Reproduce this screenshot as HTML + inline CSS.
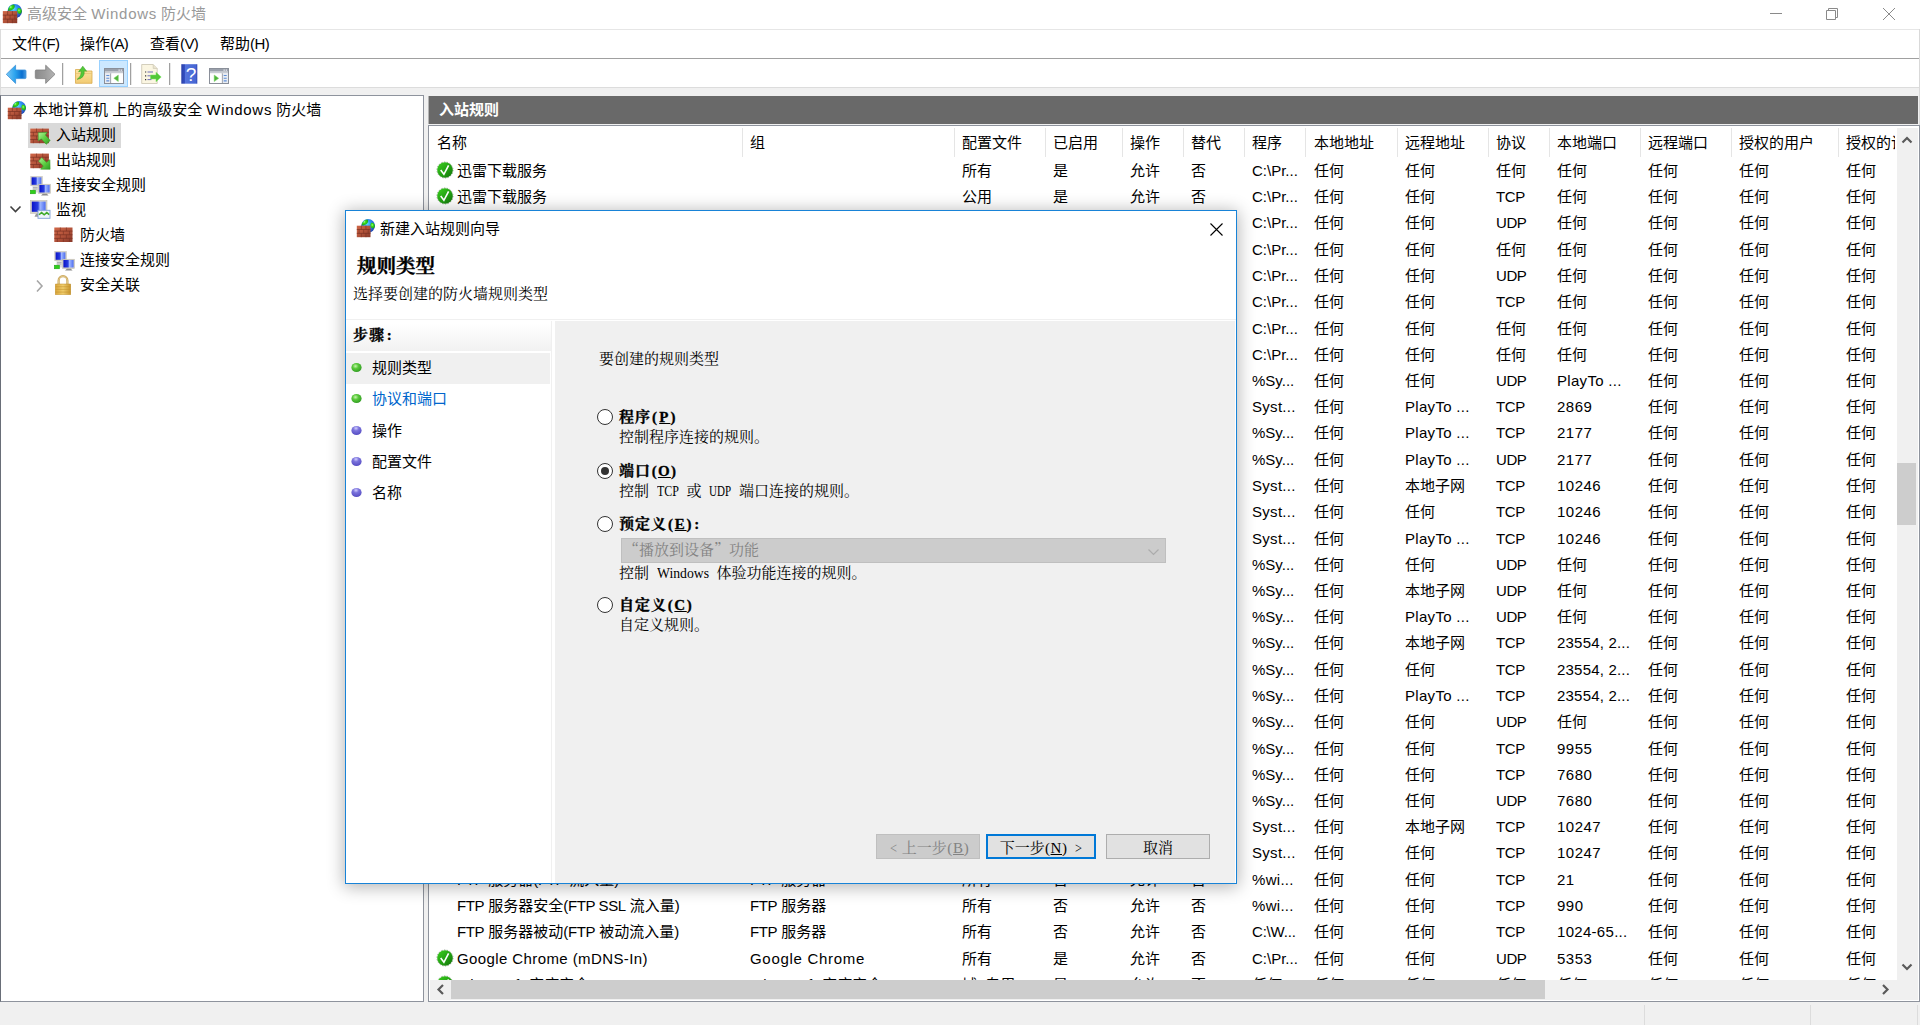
<!DOCTYPE html><html lang="zh-CN"><head><meta charset="utf-8"><title>高级安全 Windows 防火墙</title><style>
*{box-sizing:border-box;margin:0;padding:0}
html,body{width:1920px;height:1025px;overflow:hidden;background:#fff}
body{position:relative;font-family:"Liberation Sans","Noto Sans CJK SC",sans-serif;font-size:15px;color:#000;line-height:20px}
.a{position:absolute}
.t{position:absolute;white-space:nowrap;line-height:20px;height:20px}
svg{position:absolute;overflow:visible}
#titlebar{left:0;top:0;width:1920px;height:29px;background:#fff}
#title{left:27px;top:4px;color:#999}
#menubar{left:0;top:29px;width:1920px;height:30px;background:#fff;border-top:1px solid #e6e6e6;border-bottom:1px solid #a0a0a0}
.menu{top:34px}
#toolbar{left:0;top:59px;width:1920px;height:29px;background:#fff;border-bottom:1px solid #dcdcdc}
.tsep{width:2px;height:22px;top:63px;background:#a0a0a0;border-right:1px solid #e8e8e8}
#gap{left:0;top:88px;width:1920px;height:937px;background:#f0f0f0}
#wl{left:0;top:29px;width:1px;height:67px;background:#dcdcdc}
#wr{left:1919px;top:29px;width:1px;height:96px;background:#d9d9d9}
#lpane{left:0;top:95px;width:424px;height:907px;background:#fff;border:1px solid #8e939d;border-left-color:#696e78}
#rpane{left:428px;top:125px;width:1492px;height:877px;background:#fff;border:1px solid #8e939d}
#rhead{left:428px;top:96px;width:1490px;height:28px;background:#696969;border-left:1px solid #b4b4b4}
#rheadt{left:439px;top:100px;color:#fff;font-weight:bold}
#lvtop{display:none}
.tr{position:absolute;left:0;height:25px}
.sel{background:#d9d9d9}
.ls{letter-spacing:.7px}
.mn{letter-spacing:-.6px}
.hsep{position:absolute;top:128px;width:1px;height:29px;background:#e5e5e5}
.c{position:absolute;white-space:nowrap;line-height:20px;height:20px;overflow:hidden}
#list{left:429px;top:127px;width:1468px;height:853px;overflow:hidden}
#vsb{left:1897px;top:128px;width:21px;height:872px;background:#f0f0f0}
#vth{left:1897px;top:463px;width:19px;height:62px;background:#cdcdcd}
#hsb{left:430px;top:980px;width:1488px;height:20px;background:#f0f0f0}
#hth{left:451px;top:980px;width:1094px;height:19px;background:#cdcdcd}
#status{left:0;top:1003px;width:1920px;height:23px;background:#f0f0f0}
.ssep{top:1005px;width:1px;height:20px;background:#dcdcdc}

#dshadow{left:345px;top:210px;width:892px;height:674px;box-shadow:0 2px 16px 1px rgba(0,0,0,.3)}
#dlg{left:345px;top:210px;width:892px;height:674px;background:#fff;border:1px solid #1883d7;overflow:hidden}
#dlg .t,#dlg .a,#dlg svg{position:absolute}
.w{font-family:"Liberation Serif","Noto Serif CJK SC",serif;font-size:15px}
.wb{font-family:"Liberation Serif","Noto Serif CJK SC",serif;font-size:15px;font-weight:bold;letter-spacing:1px;-webkit-text-stroke:.3px #000}
.m{display:inline-block;white-space:pre;font-family:"Liberation Serif",serif;font-size:15px;letter-spacing:0;vertical-align:top;height:20px}
.m>span{display:inline-block;transform-origin:0 50%;white-space:pre}
.mb{font-weight:bold}
.u{text-decoration:underline}
.q{font-family:"Noto Serif CJK SC",serif;line-height:14px}

#dtitle{left:34px;top:8px}
#h1{left:11px;top:43px;font-family:"Liberation Serif","Noto Serif CJK SC",serif;font-size:19.5px;font-weight:bold;-webkit-text-stroke:.3px #000;line-height:26px;height:26px}
#h2{left:7px;top:73px}
#dline{left:0;top:107px;width:890px;height:3px;background:#f0f0f0;border-bottom:1px solid #fff;border-top:1px solid #fff}
#steps{left:0;top:110px;width:206px;height:562px;background:#fff}
#stepsr{left:205px;top:110px;width:1px;height:562px;background:#f0f0f0}
#stephd{left:0;top:112px;width:205px;height:28px;background:linear-gradient(#fff,#f1f1f1)}
#stepsel{left:0;top:142px;width:204px;height:31px;background:#f0f0f0}
#main{left:209px;top:110px;width:680px;height:562px;background:#f0f0f0}
.radio{width:16px;height:16px;border-radius:50%;background:#fff;border:1px solid #333}
.radio.on::after{content:"";position:absolute;left:3px;top:3px;width:8px;height:8px;border-radius:50%;background:#333}
#combo{left:275px;top:327px;width:545px;height:25px;background:#cccccc;border:1px solid #bfbfbf;color:#838383}
.btn{height:25px;top:623px;border:1px solid #adadad;background:#e1e1e1;text-align:center;line-height:23px;padding-top:2px}
</style></head><body><svg width="0" height="0" style="position:absolute"><defs>
<linearGradient id="gbrick" x1="0" y1="0" x2="1" y2="1"><stop offset="0" stop-color="#cf6647"/><stop offset=".5" stop-color="#b3533a"/><stop offset="1" stop-color="#87392a"/></linearGradient>
<radialGradient id="gglobe" cx=".42" cy=".35" r=".7"><stop offset="0" stop-color="#5fe0ff"/><stop offset=".35" stop-color="#2f9bf5"/><stop offset=".75" stop-color="#2a5fd8"/><stop offset="1" stop-color="#1c3f9c"/></radialGradient>
<radialGradient id="gland" cx=".4" cy=".4" r=".7"><stop offset="0" stop-color="#b8ff9a"/><stop offset=".3" stop-color="#3ee01c"/><stop offset="1" stop-color="#10921a"/></radialGradient>
<linearGradient id="ggreen" x1="0" y1="0" x2="1" y2="1"><stop offset="0" stop-color="#3bd01f"/><stop offset=".55" stop-color="#22a012"/><stop offset="1" stop-color="#13700c"/></linearGradient>
<linearGradient id="garrow" x1="0" y1="0" x2="1" y2="1"><stop offset="0" stop-color="#b5f29a"/><stop offset=".5" stop-color="#5fd044"/><stop offset="1" stop-color="#2d9a22"/></linearGradient>
<linearGradient id="gscreen" x1="0" y1="0" x2="1" y2="0"><stop offset="0" stop-color="#0a12c8"/><stop offset=".45" stop-color="#2a3fe0"/><stop offset=".6" stop-color="#9fb6ff"/><stop offset="1" stop-color="#4c6cf0"/></linearGradient>
<linearGradient id="ggold" x1="0" y1="0" x2="1" y2="0"><stop offset="0" stop-color="#d9a53a"/><stop offset=".5" stop-color="#f0cd6c"/><stop offset="1" stop-color="#c8952c"/></linearGradient>
<linearGradient id="gback" x1="0" y1="0" x2="1" y2="0"><stop offset="0" stop-color="#7cc8f5"/><stop offset=".45" stop-color="#2aa3ee"/><stop offset=".8" stop-color="#0a6fd0"/><stop offset="1" stop-color="#4a9be0"/></linearGradient>
<linearGradient id="gfwd" x1="0" y1="0" x2="1" y2="0"><stop offset="0" stop-color="#8a8a8a"/><stop offset=".5" stop-color="#9c9c9c"/><stop offset="1" stop-color="#b4b4b4"/></linearGradient>
<linearGradient id="gfold" x1="0" y1="0" x2="0" y2="1"><stop offset="0" stop-color="#fbe3a0"/><stop offset="1" stop-color="#f2cb73"/></linearGradient>
<linearGradient id="ghelp" x1="0" y1="0" x2="1" y2="0"><stop offset="0" stop-color="#2a3fa8"/><stop offset=".22" stop-color="#3450c4"/><stop offset=".23" stop-color="#5574dc"/><stop offset=".9" stop-color="#4666d4"/><stop offset="1" stop-color="#2d44ae"/></linearGradient>
<linearGradient id="gstep" x1="0" y1="0" x2="0" y2="1"><stop offset="0" stop-color="#ffffff"/><stop offset="1" stop-color="#efefef"/></linearGradient>
<radialGradient id="gdotg" cx=".4" cy=".35" r=".7"><stop offset="0" stop-color="#c9f5b0"/><stop offset=".4" stop-color="#59c93a"/><stop offset="1" stop-color="#2f9a22"/></radialGradient>
<radialGradient id="gdotb" cx=".45" cy=".25" r=".8"><stop offset="0" stop-color="#d2cfff"/><stop offset=".35" stop-color="#7b73dc"/><stop offset="1" stop-color="#5148c0"/></radialGradient>

<symbol id="i-fwglobe" viewBox="0 0 20 20">
<circle cx="12.1" cy="7.8" r="6.9" fill="url(#gglobe)"/>
<path d="M5.700 7.300c.2-2.900 2.600-5.300 5.600-5.800 1.300 .8 1 2.800-.2 4 -1.400 1.300-3.600 2.200-5.400 1.800z" fill="url(#gland)"/>
<path d="M15.400 4.800c1.600-.5 3 .6 3.400 2.200.3 1.500-.3 3-1.600 3.400-1.600.300-2.700-1.200-2.800-2.800-.1-1.100.3-2.200 1-2.800z" fill="url(#gland)"/>
<rect x="0.8" y="7.7" width="13.7" height="11.5" fill="url(#gbrick)"/><line x1="0.8" y1="11.53" x2="14.5" y2="11.53" stroke="#7d3325" stroke-width="0.9" opacity=".8"/><line x1="0.8" y1="15.37" x2="14.5" y2="15.37" stroke="#7d3325" stroke-width="0.9" opacity=".8"/><line x1="5.37" y1="7.70" x2="5.37" y2="11.53" stroke="#7d3325" stroke-width="0.9" opacity=".7"/><line x1="9.93" y1="7.70" x2="9.93" y2="11.53" stroke="#7d3325" stroke-width="0.9" opacity=".7"/><line x1="3.08" y1="11.53" x2="3.08" y2="15.37" stroke="#7d3325" stroke-width="0.9" opacity=".7"/><line x1="7.65" y1="11.53" x2="7.65" y2="15.37" stroke="#7d3325" stroke-width="0.9" opacity=".7"/><line x1="12.22" y1="11.53" x2="12.22" y2="15.37" stroke="#7d3325" stroke-width="0.9" opacity=".7"/><line x1="5.37" y1="15.37" x2="5.37" y2="19.20" stroke="#7d3325" stroke-width="0.9" opacity=".7"/><line x1="9.93" y1="15.37" x2="9.93" y2="19.20" stroke="#7d3325" stroke-width="0.9" opacity=".7"/>
</symbol>

<symbol id="i-wall" viewBox="0 0 20 16">
<rect x="0.3" y="0.5" width="18.2" height="14.5" fill="url(#gbrick)"/><line x1="0.3" y1="4.12" x2="18.5" y2="4.12" stroke="#7d3325" stroke-width="0.9" opacity=".8"/><line x1="0.3" y1="7.75" x2="18.5" y2="7.75" stroke="#7d3325" stroke-width="0.9" opacity=".8"/><line x1="0.3" y1="11.38" x2="18.5" y2="11.38" stroke="#7d3325" stroke-width="0.9" opacity=".8"/><line x1="6.37" y1="0.50" x2="6.37" y2="4.12" stroke="#7d3325" stroke-width="0.9" opacity=".7"/><line x1="12.43" y1="0.50" x2="12.43" y2="4.12" stroke="#7d3325" stroke-width="0.9" opacity=".7"/><line x1="3.33" y1="4.12" x2="3.33" y2="7.75" stroke="#7d3325" stroke-width="0.9" opacity=".7"/><line x1="9.40" y1="4.12" x2="9.40" y2="7.75" stroke="#7d3325" stroke-width="0.9" opacity=".7"/><line x1="15.47" y1="4.12" x2="15.47" y2="7.75" stroke="#7d3325" stroke-width="0.9" opacity=".7"/><line x1="6.37" y1="7.75" x2="6.37" y2="11.38" stroke="#7d3325" stroke-width="0.9" opacity=".7"/><line x1="12.43" y1="7.75" x2="12.43" y2="11.38" stroke="#7d3325" stroke-width="0.9" opacity=".7"/><line x1="3.33" y1="11.38" x2="3.33" y2="15.00" stroke="#7d3325" stroke-width="0.9" opacity=".7"/><line x1="9.40" y1="11.38" x2="9.40" y2="15.00" stroke="#7d3325" stroke-width="0.9" opacity=".7"/><line x1="15.47" y1="11.38" x2="15.47" y2="15.00" stroke="#7d3325" stroke-width="0.9" opacity=".7"/>
</symbol>

<symbol id="i-in" viewBox="0 0 21 17">
<rect x="0.3" y="0.6" width="18.6" height="14.6" fill="url(#gbrick)"/><line x1="0.3" y1="4.25" x2="18.900000000000002" y2="4.25" stroke="#7d3325" stroke-width="0.9" opacity=".8"/><line x1="0.3" y1="7.90" x2="18.900000000000002" y2="7.90" stroke="#7d3325" stroke-width="0.9" opacity=".8"/><line x1="0.3" y1="11.55" x2="18.900000000000002" y2="11.55" stroke="#7d3325" stroke-width="0.9" opacity=".8"/><line x1="6.50" y1="0.60" x2="6.50" y2="4.25" stroke="#7d3325" stroke-width="0.9" opacity=".7"/><line x1="12.70" y1="0.60" x2="12.70" y2="4.25" stroke="#7d3325" stroke-width="0.9" opacity=".7"/><line x1="3.40" y1="4.25" x2="3.40" y2="7.90" stroke="#7d3325" stroke-width="0.9" opacity=".7"/><line x1="9.60" y1="4.25" x2="9.60" y2="7.90" stroke="#7d3325" stroke-width="0.9" opacity=".7"/><line x1="15.80" y1="4.25" x2="15.80" y2="7.90" stroke="#7d3325" stroke-width="0.9" opacity=".7"/><line x1="6.50" y1="7.90" x2="6.50" y2="11.55" stroke="#7d3325" stroke-width="0.9" opacity=".7"/><line x1="12.70" y1="7.90" x2="12.70" y2="11.55" stroke="#7d3325" stroke-width="0.9" opacity=".7"/><line x1="3.40" y1="11.55" x2="3.40" y2="15.20" stroke="#7d3325" stroke-width="0.9" opacity=".7"/><line x1="9.60" y1="11.55" x2="9.60" y2="15.20" stroke="#7d3325" stroke-width="0.9" opacity=".7"/><line x1="15.80" y1="11.55" x2="15.80" y2="15.20" stroke="#7d3325" stroke-width="0.9" opacity=".7"/>
<path d="M8.200 4.700 L17.200 4.300 L15.400 7.100 L20.200 12.500 L16.300 16.300 L11.400 10.900 L8.300 12.800 Z" fill="url(#garrow)" stroke="#3b9a2c" stroke-width=".6"/>
</symbol>

<symbol id="i-out" viewBox="0 0 21 17">
<rect x="0.3" y="0.6" width="18.6" height="14.6" fill="url(#gbrick)"/><line x1="0.3" y1="4.25" x2="18.900000000000002" y2="4.25" stroke="#7d3325" stroke-width="0.9" opacity=".8"/><line x1="0.3" y1="7.90" x2="18.900000000000002" y2="7.90" stroke="#7d3325" stroke-width="0.9" opacity=".8"/><line x1="0.3" y1="11.55" x2="18.900000000000002" y2="11.55" stroke="#7d3325" stroke-width="0.9" opacity=".8"/><line x1="6.50" y1="0.60" x2="6.50" y2="4.25" stroke="#7d3325" stroke-width="0.9" opacity=".7"/><line x1="12.70" y1="0.60" x2="12.70" y2="4.25" stroke="#7d3325" stroke-width="0.9" opacity=".7"/><line x1="3.40" y1="4.25" x2="3.40" y2="7.90" stroke="#7d3325" stroke-width="0.9" opacity=".7"/><line x1="9.60" y1="4.25" x2="9.60" y2="7.90" stroke="#7d3325" stroke-width="0.9" opacity=".7"/><line x1="15.80" y1="4.25" x2="15.80" y2="7.90" stroke="#7d3325" stroke-width="0.9" opacity=".7"/><line x1="6.50" y1="7.90" x2="6.50" y2="11.55" stroke="#7d3325" stroke-width="0.9" opacity=".7"/><line x1="12.70" y1="7.90" x2="12.70" y2="11.55" stroke="#7d3325" stroke-width="0.9" opacity=".7"/><line x1="3.40" y1="11.55" x2="3.40" y2="15.20" stroke="#7d3325" stroke-width="0.9" opacity=".7"/><line x1="9.60" y1="11.55" x2="9.60" y2="15.20" stroke="#7d3325" stroke-width="0.9" opacity=".7"/><line x1="15.80" y1="11.55" x2="15.80" y2="15.20" stroke="#7d3325" stroke-width="0.9" opacity=".7"/>
<path d="M11.800 4.500 L16.500 9.400 L19.900 6.700 L20.100 16.300 L10.600 16.200 L13.300 13.100 L8.500 8.100 Z" fill="url(#garrow)" stroke="#3b9a2c" stroke-width=".6"/>
</symbol>

<symbol id="i-conn" viewBox="0 0 21 20">
<rect x="0.800" y="0.600" width="11.500" height="9.200" fill="#d6d3c8" stroke="#b9b6ab" stroke-width=".5"/>
<rect x="1.600" y="1.300" width="9.800" height="7.500" fill="url(#gscreen)"/>
<rect x="2.500" y="10" width="6" height="6.500" fill="#dcdcdc"/>
<rect x="3" y="11" width="4.500" height=".8" fill="#aaa"/><rect x="3" y="12.600" width="4.500" height=".8" fill="#aaa"/>
<rect x="0.300" y="14.200" width="5.200" height="3.600" fill="#2fcf1a" stroke="#1e9e12" stroke-width=".5"/>
<rect x="8.500" y="8.200" width="12" height="9.300" fill="#d6d3c8" stroke="#b9b6ab" stroke-width=".5"/>
<rect x="9.400" y="9" width="10.200" height="7.500" fill="url(#gscreen)"/>
<path d="M11 19.600 l1.800-1.800 h4 l1.800 1.800z" fill="#8c8c8c"/>
</symbol>

<symbol id="i-mon" viewBox="0 0 21 19">
<rect x="0.500" y="0.400" width="16.500" height="13" fill="#d6d3c8" stroke="#b9b6ab" stroke-width=".5"/>
<rect x="1.800" y="1.600" width="13.800" height="10.200" fill="url(#gscreen)"/>
<path d="M4.500 16.800 l1.500-3 h4 l1.500 3z" fill="#9a9a9a"/>
<rect x="8" y="10.300" width="12" height="8" fill="#eef3fb" stroke="#7f9fd6" stroke-width=".9"/>
<path d="M9 14.800 l2.600-2.200 2.600 2.200 2.600-2.200 2.400 2" fill="none" stroke="#3faa2a" stroke-width="1.500"/>
</symbol>

<symbol id="i-lock" viewBox="0 0 16 20">
<path d="M3.600 9.500 V5.800 a4.400 4.600 0 0 1 8.800 0 V9.500" fill="none" stroke="#c9a558" stroke-width="2.200"/>
<path d="M3.600 9.500 V5.800 a4.400 4.600 0 0 1 8.800 0 V9.500" fill="none" stroke="#e9d39a" stroke-width=".8"/>
<rect x="0.200" y="9" width="15.600" height="10.800" rx=".6" fill="url(#ggold)" stroke="#b88a28" stroke-width=".5"/>
<path d="M.5 11.700h15M.5 14.400h15M.5 17.100h15" stroke="#c4942e" stroke-width=".7" opacity=".8"/>
</symbol>

<symbol id="i-ok" viewBox="0 0 18 18">
<circle cx="9" cy="9" r="8" fill="none" stroke="#7d8a7a" stroke-width="1" stroke-dasharray="1.400 1.400" opacity=".8"/>
<circle cx="9" cy="9" r="7.800" fill="url(#ggreen)"/>
<path d="M4.700 9.100 L7.900 13.300 L12.600 4.300" fill="none" stroke="#fff" stroke-width="1.600"/>
</symbol>
</defs></svg>
<div class="a" id="gap"></div><div class="a" id="titlebar"></div><svg style="left:2px;top:3px" width="21" height="21"><use href="#i-fwglobe"/></svg><div class="t" id="title">高级安全 <span class="ls">Windows</span> 防火墙</div><svg style="left:1760px;top:0" width="160" height="29" viewBox="1760 0 160 29"><g stroke="#8a8a8a" stroke-width="1" fill="none"><path d="M1770 13.500h12"/><path d="M1826.500 10.500h9v9h-9z"/><path d="M1828.500 10.500v-2h9v9h-2"/><path d="M1883 8l12 12M1895 8l-12 12"/></g></svg><div class="a" id="menubar"></div><div class="t menu" style="left:12px">文件<span class="mn">(F)</span></div><div class="t menu" style="left:80px">操作<span class="mn">(A)</span></div><div class="t menu" style="left:150px">查看<span class="mn">(V)</span></div><div class="t menu" style="left:220px">帮助<span class="mn">(H)</span></div><div class="a" id="toolbar"></div><svg style="left:0;top:59px" width="260" height="29" viewBox="0 59 260 29">
<path d="M6.300 74.300 L15.600 65.200 V70 H25 q1 0 1 1 V77.600 q0 1-1 1 H15.600 V83.400 Z" fill="url(#gback)" stroke="#3a8fd8" stroke-width=".8" stroke-linejoin="round"/>
<path d="M55 74.300 L45.700 65.200 V70 H36.300 q-1 0-1 1 V77.600 q0 1 1 1 H45.700 V83.400 Z" fill="url(#gfwd)" stroke="#7d7d7d" stroke-width=".8" stroke-linejoin="round"/>
<path d="M75.500 69.500 h6 l1.500 1.500 h9 v12.300 h-16.500z" fill="url(#gfold)" stroke="#d9ab4c" stroke-width=".8"/>
<path d="M75.500 73.500 h16.500" stroke="#e7c170" stroke-width=".7"/>
<path d="M77.200 79.300 q4.300-2.800 4-8.300 l-2.600 .8 l4.200-5.600 l3.800 5 l-2.400-.500 q.8 7.500-7 8.600z" fill="#52c838" stroke="#3aa526" stroke-width=".6"/>
<rect x="99.500" y="60.500" width="28" height="26" fill="#cce8ff" stroke="#99d1ff"/>
<g transform="translate(104,68)"><rect x=".5" y=".5" width="19" height="15" fill="#f4f4f4" stroke="#8a8f99"/><rect x="1" y="1" width="18" height="2.600" fill="#9aa0ab"/><rect x="1" y="3.600" width="18" height="1.800" fill="#c9cdd4"/><rect x="14.500" y="1.500" width="1.300" height="1.300" fill="#e8e8f0"/><rect x="16.700" y="1.500" width="1.300" height="1.300" fill="#e8e8f0"/><rect x="1" y="5.400" width="5.500" height="9.600" fill="#e9ecf2"/><line x1="6.800" y1="5.400" x2="6.800" y2="15" stroke="#8a8f99"/><path d="M2.300 7.500h3M2.300 10.200h3M2.300 12.900h3" stroke="#5f8fd8" stroke-width="1.100"/><rect x="7.300" y="5.400" width="11.700" height="9.600" fill="#fff"/><path d="M14.300 7 L9.800 10.300 L14.300 13.600 Z" fill="#4fb53a" stroke="#7fd46a" stroke-width=".5"/></g>
<path d="M141.700 64.500 h11.500 l4 4 v15 h-15.500z" fill="#fbf6e2" stroke="#c9c4b0" stroke-width=".8"/>
<path d="M153.200 64.500 v4 h4" fill="#e9e4cf" stroke="#c9c4b0" stroke-width=".6"/>
<path d="M145 72h1.200M145 75.800h1.200M145 79.600h1.200" stroke="#333" stroke-width="1.200"/>
<path d="M147.500 72h5.500M147.500 75.800h4M147.500 79.600h4" stroke="#6f6fb8" stroke-width="1"/>
<path d="M150.500 75 h5.500 v-2.800 l5.200 4.800 l-5.200 4.800 v-2.800 h-5.500z" fill="#52c838" stroke="#7fe066" stroke-width=".5"/>
<rect x="181.300" y="64.200" width="16" height="19.500" fill="url(#ghelp)"/>
<text x="191" y="81" font-family="Liberation Sans,sans-serif" font-size="19" fill="#fff" text-anchor="middle">?</text>
<g transform="translate(209,68)"><rect x=".5" y=".5" width="19" height="15" fill="#f4f4f4" stroke="#8a8f99"/><rect x="1" y="1" width="18" height="2.600" fill="#9aa0ab"/><rect x="1" y="3.600" width="18" height="1.800" fill="#c9cdd4"/><rect x="14.500" y="1.500" width="1.300" height="1.300" fill="#e8e8f0"/><rect x="16.700" y="1.500" width="1.300" height="1.300" fill="#e8e8f0"/><rect x="13.500" y="5.400" width="5.500" height="9.600" fill="#e9ecf2"/><line x1="13.200" y1="5.400" x2="13.200" y2="15" stroke="#8a8f99"/><path d="M14.700 7.500h3M14.700 10.200h3M14.700 12.900h3" stroke="#5f8fd8" stroke-width="1.100"/><rect x="1" y="5.400" width="11.700" height="9.600" fill="#fff"/><path d="M5.200 7 L9.700 10.300 L5.200 13.600 Z" fill="#4fb53a" stroke="#7fd46a" stroke-width=".5"/></g>
</svg><div class="a tsep" style="left:62px"></div><div class="a tsep" style="left:130px"></div><div class="a tsep" style="left:169px"></div><div class="a" id="wl"></div><div class="a" id="wr"></div><div class="a" id="lpane"></div><div class="a sel" style="left:28px;top:123px;width:93px;height:25px"></div><svg style="left:7px;top:100px" width="20" height="20"><use href="#i-fwglobe"/></svg><div class="t" style="left:33px;top:100px">本地计算机 上的高级安全 <span class="ls">Windows</span> 防火墙</div><svg style="left:30px;top:128px" width="21" height="17"><use href="#i-in"/></svg><div class="t" style="left:56px;top:125px">入站规则</div><svg style="left:30px;top:153px" width="21" height="17"><use href="#i-out"/></svg><div class="t" style="left:56px;top:150px">出站规则</div><svg style="left:30px;top:176px" width="21" height="20"><use href="#i-conn"/></svg><div class="t" style="left:56px;top:175px">连接安全规则</div><svg style="left:30px;top:200px" width="21" height="19"><use href="#i-mon"/></svg><div class="t" style="left:56px;top:200px">监视</div><svg style="left:54px;top:227px" width="20" height="16"><use href="#i-wall"/></svg><div class="t" style="left:80px;top:225px">防火墙</div><svg style="left:54px;top:251px" width="21" height="20"><use href="#i-conn"/></svg><div class="t" style="left:80px;top:250px">连接安全规则</div><svg style="left:55px;top:275px" width="16" height="20"><use href="#i-lock"/></svg><div class="t" style="left:80px;top:275px">安全关联</div><svg style="left:8px;top:203px" width="16" height="12"><path d="M2.500 3.500l5 5l5-5" fill="none" stroke="#404040" stroke-width="1.600"/></svg><svg style="left:34px;top:279px" width="12" height="14"><path d="M3 1.500l5 5.500l-5 5.500" fill="none" stroke="#a6a6a6" stroke-width="1.600"/></svg><div class="a" id="rpane"></div><div class="a" id="rhead"></div><div class="t" id="rheadt">入站规则</div><div class="a" id="lvtop"></div><div class="c" style="left:437px;top:133px;width:303px">名称</div><div class="c" style="left:750px;top:133px;width:202px">组</div><div class="c" style="left:962px;top:133px;width:81px">配置文件</div><div class="c" style="left:1053px;top:133px;width:67px">已启用</div><div class="c" style="left:1130px;top:133px;width:51px">操作</div><div class="c" style="left:1191px;top:133px;width:51px">替代</div><div class="c" style="left:1252px;top:133px;width:51px">程序</div><div class="c" style="left:1314px;top:133px;width:81px">本地地址</div><div class="c" style="left:1405px;top:133px;width:81px">远程地址</div><div class="c" style="left:1496px;top:133px;width:51px">协议</div><div class="c" style="left:1557px;top:133px;width:81px">本地端口</div><div class="c" style="left:1648px;top:133px;width:81px">远程端口</div><div class="c" style="left:1739px;top:133px;width:97px">授权的用户</div><div class="c" style="left:1846px;top:133px;width:49px">授权的计算机</div><div class="hsep" style="left:742px"></div><div class="hsep" style="left:954px"></div><div class="hsep" style="left:1045px"></div><div class="hsep" style="left:1122px"></div><div class="hsep" style="left:1183px"></div><div class="hsep" style="left:1244px"></div><div class="hsep" style="left:1305px"></div><div class="hsep" style="left:1397px"></div><div class="hsep" style="left:1488px"></div><div class="hsep" style="left:1549px"></div><div class="hsep" style="left:1640px"></div><div class="hsep" style="left:1731px"></div><div class="hsep" style="left:1838px"></div><div class="a" id="list"><svg style="left:7px;top:34px" width="18" height="18"><use href="#i-ok"/></svg><div class="c" style="left:28px;top:34px;width:281px">迅雷下载服务</div><div class="c" style="left:533px;top:34px;width:79px">所有</div><div class="c" style="left:624px;top:34px;width:65px">是</div><div class="c" style="left:701px;top:34px;width:49px">允许</div><div class="c" style="left:762px;top:34px;width:49px">否</div><div class="c" style="left:823px;top:34px;width:49px">C:\Pr...</div><div class="c" style="left:885px;top:34px;width:79px">任何</div><div class="c" style="left:976px;top:34px;width:79px">任何</div><div class="c" style="left:1067px;top:34px;width:49px">任何</div><div class="c" style="left:1128px;top:34px;width:79px">任何</div><div class="c" style="left:1219px;top:34px;width:79px">任何</div><div class="c" style="left:1310px;top:34px;width:95px">任何</div><div class="c" style="left:1417px;top:34px;width:47px">任何</div><svg style="left:7px;top:60px" width="18" height="18"><use href="#i-ok"/></svg><div class="c" style="left:28px;top:60px;width:281px">迅雷下载服务</div><div class="c" style="left:533px;top:60px;width:79px">公用</div><div class="c" style="left:624px;top:60px;width:65px">是</div><div class="c" style="left:701px;top:60px;width:49px">允许</div><div class="c" style="left:762px;top:60px;width:49px">否</div><div class="c" style="left:823px;top:60px;width:49px">C:\Pr...</div><div class="c" style="left:885px;top:60px;width:79px">任何</div><div class="c" style="left:976px;top:60px;width:79px">任何</div><div class="c" style="left:1067px;top:60px;width:49px"><span style="letter-spacing:-0.4px">TCP</span></div><div class="c" style="left:1128px;top:60px;width:79px">任何</div><div class="c" style="left:1219px;top:60px;width:79px">任何</div><div class="c" style="left:1310px;top:60px;width:95px">任何</div><div class="c" style="left:1417px;top:60px;width:47px">任何</div><svg style="left:7px;top:86px" width="18" height="18"><use href="#i-ok"/></svg><div class="c" style="left:28px;top:86px;width:281px">迅雷下载服务</div><div class="c" style="left:533px;top:86px;width:79px">公用</div><div class="c" style="left:624px;top:86px;width:65px">是</div><div class="c" style="left:701px;top:86px;width:49px">允许</div><div class="c" style="left:762px;top:86px;width:49px">否</div><div class="c" style="left:823px;top:86px;width:49px">C:\Pr...</div><div class="c" style="left:885px;top:86px;width:79px">任何</div><div class="c" style="left:976px;top:86px;width:79px">任何</div><div class="c" style="left:1067px;top:86px;width:49px"><span style="letter-spacing:-0.4px">UDP</span></div><div class="c" style="left:1128px;top:86px;width:79px">任何</div><div class="c" style="left:1219px;top:86px;width:79px">任何</div><div class="c" style="left:1310px;top:86px;width:95px">任何</div><div class="c" style="left:1417px;top:86px;width:47px">任何</div><svg style="left:7px;top:113px" width="18" height="18"><use href="#i-ok"/></svg><div class="c" style="left:28px;top:113px;width:281px">迅雷影音</div><div class="c" style="left:533px;top:113px;width:79px">所有</div><div class="c" style="left:624px;top:113px;width:65px">是</div><div class="c" style="left:701px;top:113px;width:49px">允许</div><div class="c" style="left:762px;top:113px;width:49px">否</div><div class="c" style="left:823px;top:113px;width:49px">C:\Pr...</div><div class="c" style="left:885px;top:113px;width:79px">任何</div><div class="c" style="left:976px;top:113px;width:79px">任何</div><div class="c" style="left:1067px;top:113px;width:49px">任何</div><div class="c" style="left:1128px;top:113px;width:79px">任何</div><div class="c" style="left:1219px;top:113px;width:79px">任何</div><div class="c" style="left:1310px;top:113px;width:95px">任何</div><div class="c" style="left:1417px;top:113px;width:47px">任何</div><svg style="left:7px;top:139px" width="18" height="18"><use href="#i-ok"/></svg><div class="c" style="left:28px;top:139px;width:281px">迅雷影音</div><div class="c" style="left:533px;top:139px;width:79px">公用</div><div class="c" style="left:624px;top:139px;width:65px">是</div><div class="c" style="left:701px;top:139px;width:49px">允许</div><div class="c" style="left:762px;top:139px;width:49px">否</div><div class="c" style="left:823px;top:139px;width:49px">C:\Pr...</div><div class="c" style="left:885px;top:139px;width:79px">任何</div><div class="c" style="left:976px;top:139px;width:79px">任何</div><div class="c" style="left:1067px;top:139px;width:49px"><span style="letter-spacing:-0.4px">UDP</span></div><div class="c" style="left:1128px;top:139px;width:79px">任何</div><div class="c" style="left:1219px;top:139px;width:79px">任何</div><div class="c" style="left:1310px;top:139px;width:95px">任何</div><div class="c" style="left:1417px;top:139px;width:47px">任何</div><svg style="left:7px;top:165px" width="18" height="18"><use href="#i-ok"/></svg><div class="c" style="left:28px;top:165px;width:281px">迅雷影音</div><div class="c" style="left:533px;top:165px;width:79px">公用</div><div class="c" style="left:624px;top:165px;width:65px">是</div><div class="c" style="left:701px;top:165px;width:49px">允许</div><div class="c" style="left:762px;top:165px;width:49px">否</div><div class="c" style="left:823px;top:165px;width:49px">C:\Pr...</div><div class="c" style="left:885px;top:165px;width:79px">任何</div><div class="c" style="left:976px;top:165px;width:79px">任何</div><div class="c" style="left:1067px;top:165px;width:49px"><span style="letter-spacing:-0.4px">TCP</span></div><div class="c" style="left:1128px;top:165px;width:79px">任何</div><div class="c" style="left:1219px;top:165px;width:79px">任何</div><div class="c" style="left:1310px;top:165px;width:95px">任何</div><div class="c" style="left:1417px;top:165px;width:47px">任何</div><svg style="left:7px;top:192px" width="18" height="18"><use href="#i-ok"/></svg><div class="c" style="left:28px;top:192px;width:281px">迅雷看看播放器</div><div class="c" style="left:533px;top:192px;width:79px">所有</div><div class="c" style="left:624px;top:192px;width:65px">是</div><div class="c" style="left:701px;top:192px;width:49px">允许</div><div class="c" style="left:762px;top:192px;width:49px">否</div><div class="c" style="left:823px;top:192px;width:49px">C:\Pr...</div><div class="c" style="left:885px;top:192px;width:79px">任何</div><div class="c" style="left:976px;top:192px;width:79px">任何</div><div class="c" style="left:1067px;top:192px;width:49px">任何</div><div class="c" style="left:1128px;top:192px;width:79px">任何</div><div class="c" style="left:1219px;top:192px;width:79px">任何</div><div class="c" style="left:1310px;top:192px;width:95px">任何</div><div class="c" style="left:1417px;top:192px;width:47px">任何</div><svg style="left:7px;top:218px" width="18" height="18"><use href="#i-ok"/></svg><div class="c" style="left:28px;top:218px;width:281px">迅雷看看播放器</div><div class="c" style="left:533px;top:218px;width:79px">所有</div><div class="c" style="left:624px;top:218px;width:65px">是</div><div class="c" style="left:701px;top:218px;width:49px">允许</div><div class="c" style="left:762px;top:218px;width:49px">否</div><div class="c" style="left:823px;top:218px;width:49px">C:\Pr...</div><div class="c" style="left:885px;top:218px;width:79px">任何</div><div class="c" style="left:976px;top:218px;width:79px">任何</div><div class="c" style="left:1067px;top:218px;width:49px">任何</div><div class="c" style="left:1128px;top:218px;width:79px">任何</div><div class="c" style="left:1219px;top:218px;width:79px">任何</div><div class="c" style="left:1310px;top:218px;width:95px">任何</div><div class="c" style="left:1417px;top:218px;width:47px">任何</div><svg style="left:7px;top:244px" width="18" height="18"><use href="#i-ok"/></svg><div class="c" style="left:28px;top:244px;width:281px">“播放到设备”<span style="letter-spacing:-0.4px">SSDP</span> 发现<span style="letter-spacing:-0.1px">(UDP-In)</span></div><div class="c" style="left:321px;top:244px;width:200px">“播放到设备”功能</div><div class="c" style="left:533px;top:244px;width:79px">公用</div><div class="c" style="left:624px;top:244px;width:65px">是</div><div class="c" style="left:701px;top:244px;width:49px">允许</div><div class="c" style="left:762px;top:244px;width:49px">否</div><div class="c" style="left:823px;top:244px;width:49px">%Sy...</div><div class="c" style="left:885px;top:244px;width:79px">任何</div><div class="c" style="left:976px;top:244px;width:79px">任何</div><div class="c" style="left:1067px;top:244px;width:49px"><span style="letter-spacing:-0.4px">UDP</span></div><div class="c" style="left:1128px;top:244px;width:79px"><span style="letter-spacing:0.3px">PlayTo ...</span></div><div class="c" style="left:1219px;top:244px;width:79px">任何</div><div class="c" style="left:1310px;top:244px;width:95px">任何</div><div class="c" style="left:1417px;top:244px;width:47px">任何</div><svg style="left:7px;top:270px" width="18" height="18"><use href="#i-ok"/></svg><div class="c" style="left:28px;top:270px;width:281px">“播放到设备”<span style="letter-spacing:-0.1px">UPnP</span> 事件<span style="letter-spacing:-0.1px">(TCP-In)</span></div><div class="c" style="left:321px;top:270px;width:200px">“播放到设备”功能</div><div class="c" style="left:533px;top:270px;width:79px">公用</div><div class="c" style="left:624px;top:270px;width:65px">是</div><div class="c" style="left:701px;top:270px;width:49px">允许</div><div class="c" style="left:762px;top:270px;width:49px">否</div><div class="c" style="left:823px;top:270px;width:49px"><span style="letter-spacing:0.3px">Syst...</span></div><div class="c" style="left:885px;top:270px;width:79px">任何</div><div class="c" style="left:976px;top:270px;width:79px"><span style="letter-spacing:0.3px">PlayTo ...</span></div><div class="c" style="left:1067px;top:270px;width:49px"><span style="letter-spacing:-0.4px">TCP</span></div><div class="c" style="left:1128px;top:270px;width:79px"><span style="letter-spacing:0.5px">2869</span></div><div class="c" style="left:1219px;top:270px;width:79px">任何</div><div class="c" style="left:1310px;top:270px;width:95px">任何</div><div class="c" style="left:1417px;top:270px;width:47px">任何</div><svg style="left:7px;top:296px" width="18" height="18"><use href="#i-ok"/></svg><div class="c" style="left:28px;top:296px;width:281px">“播放到设备”功能<span style="letter-spacing:0.2px">(qWave-TCP-In)</span></div><div class="c" style="left:321px;top:296px;width:200px">“播放到设备”功能</div><div class="c" style="left:533px;top:296px;width:79px">专用<span style="letter-spacing:-0.1px">,</span> 公用</div><div class="c" style="left:624px;top:296px;width:65px">是</div><div class="c" style="left:701px;top:296px;width:49px">允许</div><div class="c" style="left:762px;top:296px;width:49px">否</div><div class="c" style="left:823px;top:296px;width:49px">%Sy...</div><div class="c" style="left:885px;top:296px;width:79px">任何</div><div class="c" style="left:976px;top:296px;width:79px"><span style="letter-spacing:0.3px">PlayTo ...</span></div><div class="c" style="left:1067px;top:296px;width:49px"><span style="letter-spacing:-0.4px">TCP</span></div><div class="c" style="left:1128px;top:296px;width:79px"><span style="letter-spacing:0.5px">2177</span></div><div class="c" style="left:1219px;top:296px;width:79px">任何</div><div class="c" style="left:1310px;top:296px;width:95px">任何</div><div class="c" style="left:1417px;top:296px;width:47px">任何</div><svg style="left:7px;top:323px" width="18" height="18"><use href="#i-ok"/></svg><div class="c" style="left:28px;top:323px;width:281px">“播放到设备”功能<span style="letter-spacing:0.2px">(qWave-UDP-In)</span></div><div class="c" style="left:321px;top:323px;width:200px">“播放到设备”功能</div><div class="c" style="left:533px;top:323px;width:79px">专用<span style="letter-spacing:-0.1px">,</span> 公用</div><div class="c" style="left:624px;top:323px;width:65px">是</div><div class="c" style="left:701px;top:323px;width:49px">允许</div><div class="c" style="left:762px;top:323px;width:49px">否</div><div class="c" style="left:823px;top:323px;width:49px">%Sy...</div><div class="c" style="left:885px;top:323px;width:79px">任何</div><div class="c" style="left:976px;top:323px;width:79px"><span style="letter-spacing:0.3px">PlayTo ...</span></div><div class="c" style="left:1067px;top:323px;width:49px"><span style="letter-spacing:-0.4px">UDP</span></div><div class="c" style="left:1128px;top:323px;width:79px"><span style="letter-spacing:0.5px">2177</span></div><div class="c" style="left:1219px;top:323px;width:79px">任何</div><div class="c" style="left:1310px;top:323px;width:95px">任何</div><div class="c" style="left:1417px;top:323px;width:47px">任何</div><svg style="left:7px;top:349px" width="18" height="18"><use href="#i-ok"/></svg><div class="c" style="left:28px;top:349px;width:281px">“播放到设备”流式处理服务器<span style="letter-spacing:0.3px">(HTTP-Streaming-In)</span></div><div class="c" style="left:321px;top:349px;width:200px">“播放到设备”功能</div><div class="c" style="left:533px;top:349px;width:79px">专用</div><div class="c" style="left:624px;top:349px;width:65px">是</div><div class="c" style="left:701px;top:349px;width:49px">允许</div><div class="c" style="left:762px;top:349px;width:49px">否</div><div class="c" style="left:823px;top:349px;width:49px"><span style="letter-spacing:0.3px">Syst...</span></div><div class="c" style="left:885px;top:349px;width:79px">任何</div><div class="c" style="left:976px;top:349px;width:79px">本地子网</div><div class="c" style="left:1067px;top:349px;width:49px"><span style="letter-spacing:-0.4px">TCP</span></div><div class="c" style="left:1128px;top:349px;width:79px"><span style="letter-spacing:0.5px">10246</span></div><div class="c" style="left:1219px;top:349px;width:79px">任何</div><div class="c" style="left:1310px;top:349px;width:95px">任何</div><div class="c" style="left:1417px;top:349px;width:47px">任何</div><svg style="left:7px;top:375px" width="18" height="18"><use href="#i-ok"/></svg><div class="c" style="left:28px;top:375px;width:281px">“播放到设备”流式处理服务器<span style="letter-spacing:0.3px">(HTTP-Streaming-In)</span></div><div class="c" style="left:321px;top:375px;width:200px">“播放到设备”功能</div><div class="c" style="left:533px;top:375px;width:79px">域</div><div class="c" style="left:624px;top:375px;width:65px">是</div><div class="c" style="left:701px;top:375px;width:49px">允许</div><div class="c" style="left:762px;top:375px;width:49px">否</div><div class="c" style="left:823px;top:375px;width:49px"><span style="letter-spacing:0.3px">Syst...</span></div><div class="c" style="left:885px;top:375px;width:79px">任何</div><div class="c" style="left:976px;top:375px;width:79px">任何</div><div class="c" style="left:1067px;top:375px;width:49px"><span style="letter-spacing:-0.4px">TCP</span></div><div class="c" style="left:1128px;top:375px;width:79px"><span style="letter-spacing:0.5px">10246</span></div><div class="c" style="left:1219px;top:375px;width:79px">任何</div><div class="c" style="left:1310px;top:375px;width:95px">任何</div><div class="c" style="left:1417px;top:375px;width:47px">任何</div><svg style="left:7px;top:402px" width="18" height="18"><use href="#i-ok"/></svg><div class="c" style="left:28px;top:402px;width:281px">“播放到设备”流式处理服务器<span style="letter-spacing:0.3px">(HTTP-Streaming-In)</span></div><div class="c" style="left:321px;top:402px;width:200px">“播放到设备”功能</div><div class="c" style="left:533px;top:402px;width:79px">公用</div><div class="c" style="left:624px;top:402px;width:65px">是</div><div class="c" style="left:701px;top:402px;width:49px">允许</div><div class="c" style="left:762px;top:402px;width:49px">否</div><div class="c" style="left:823px;top:402px;width:49px"><span style="letter-spacing:0.3px">Syst...</span></div><div class="c" style="left:885px;top:402px;width:79px">任何</div><div class="c" style="left:976px;top:402px;width:79px"><span style="letter-spacing:0.3px">PlayTo ...</span></div><div class="c" style="left:1067px;top:402px;width:49px"><span style="letter-spacing:-0.4px">TCP</span></div><div class="c" style="left:1128px;top:402px;width:79px"><span style="letter-spacing:0.5px">10246</span></div><div class="c" style="left:1219px;top:402px;width:79px">任何</div><div class="c" style="left:1310px;top:402px;width:95px">任何</div><div class="c" style="left:1417px;top:402px;width:47px">任何</div><svg style="left:7px;top:428px" width="18" height="18"><use href="#i-ok"/></svg><div class="c" style="left:28px;top:428px;width:281px">“播放到设备”流式处理服务器<span style="letter-spacing:0.3px">(RTCP-Streaming-In)</span></div><div class="c" style="left:321px;top:428px;width:200px">“播放到设备”功能</div><div class="c" style="left:533px;top:428px;width:79px">域</div><div class="c" style="left:624px;top:428px;width:65px">是</div><div class="c" style="left:701px;top:428px;width:49px">允许</div><div class="c" style="left:762px;top:428px;width:49px">否</div><div class="c" style="left:823px;top:428px;width:49px">%Sy...</div><div class="c" style="left:885px;top:428px;width:79px">任何</div><div class="c" style="left:976px;top:428px;width:79px">任何</div><div class="c" style="left:1067px;top:428px;width:49px"><span style="letter-spacing:-0.4px">UDP</span></div><div class="c" style="left:1128px;top:428px;width:79px">任何</div><div class="c" style="left:1219px;top:428px;width:79px">任何</div><div class="c" style="left:1310px;top:428px;width:95px">任何</div><div class="c" style="left:1417px;top:428px;width:47px">任何</div><svg style="left:7px;top:454px" width="18" height="18"><use href="#i-ok"/></svg><div class="c" style="left:28px;top:454px;width:281px">“播放到设备”流式处理服务器<span style="letter-spacing:0.3px">(RTCP-Streaming-In)</span></div><div class="c" style="left:321px;top:454px;width:200px">“播放到设备”功能</div><div class="c" style="left:533px;top:454px;width:79px">专用</div><div class="c" style="left:624px;top:454px;width:65px">是</div><div class="c" style="left:701px;top:454px;width:49px">允许</div><div class="c" style="left:762px;top:454px;width:49px">否</div><div class="c" style="left:823px;top:454px;width:49px">%Sy...</div><div class="c" style="left:885px;top:454px;width:79px">任何</div><div class="c" style="left:976px;top:454px;width:79px">本地子网</div><div class="c" style="left:1067px;top:454px;width:49px"><span style="letter-spacing:-0.4px">UDP</span></div><div class="c" style="left:1128px;top:454px;width:79px">任何</div><div class="c" style="left:1219px;top:454px;width:79px">任何</div><div class="c" style="left:1310px;top:454px;width:95px">任何</div><div class="c" style="left:1417px;top:454px;width:47px">任何</div><svg style="left:7px;top:480px" width="18" height="18"><use href="#i-ok"/></svg><div class="c" style="left:28px;top:480px;width:281px">“播放到设备”流式处理服务器<span style="letter-spacing:0.3px">(RTCP-Streaming-In)</span></div><div class="c" style="left:321px;top:480px;width:200px">“播放到设备”功能</div><div class="c" style="left:533px;top:480px;width:79px">公用</div><div class="c" style="left:624px;top:480px;width:65px">是</div><div class="c" style="left:701px;top:480px;width:49px">允许</div><div class="c" style="left:762px;top:480px;width:49px">否</div><div class="c" style="left:823px;top:480px;width:49px">%Sy...</div><div class="c" style="left:885px;top:480px;width:79px">任何</div><div class="c" style="left:976px;top:480px;width:79px"><span style="letter-spacing:0.3px">PlayTo ...</span></div><div class="c" style="left:1067px;top:480px;width:49px"><span style="letter-spacing:-0.4px">UDP</span></div><div class="c" style="left:1128px;top:480px;width:79px">任何</div><div class="c" style="left:1219px;top:480px;width:79px">任何</div><div class="c" style="left:1310px;top:480px;width:95px">任何</div><div class="c" style="left:1417px;top:480px;width:47px">任何</div><svg style="left:7px;top:506px" width="18" height="18"><use href="#i-ok"/></svg><div class="c" style="left:28px;top:506px;width:281px">“播放到设备”流式处理服务器<span style="letter-spacing:0.3px">(RTSP-Streaming-In)</span></div><div class="c" style="left:321px;top:506px;width:200px">“播放到设备”功能</div><div class="c" style="left:533px;top:506px;width:79px">专用</div><div class="c" style="left:624px;top:506px;width:65px">是</div><div class="c" style="left:701px;top:506px;width:49px">允许</div><div class="c" style="left:762px;top:506px;width:49px">否</div><div class="c" style="left:823px;top:506px;width:49px">%Sy...</div><div class="c" style="left:885px;top:506px;width:79px">任何</div><div class="c" style="left:976px;top:506px;width:79px">本地子网</div><div class="c" style="left:1067px;top:506px;width:49px"><span style="letter-spacing:-0.4px">TCP</span></div><div class="c" style="left:1128px;top:506px;width:79px"><span style="letter-spacing:0.2px">23554, 2...</span></div><div class="c" style="left:1219px;top:506px;width:79px">任何</div><div class="c" style="left:1310px;top:506px;width:95px">任何</div><div class="c" style="left:1417px;top:506px;width:47px">任何</div><svg style="left:7px;top:533px" width="18" height="18"><use href="#i-ok"/></svg><div class="c" style="left:28px;top:533px;width:281px">“播放到设备”流式处理服务器<span style="letter-spacing:0.3px">(RTSP-Streaming-In)</span></div><div class="c" style="left:321px;top:533px;width:200px">“播放到设备”功能</div><div class="c" style="left:533px;top:533px;width:79px">域</div><div class="c" style="left:624px;top:533px;width:65px">是</div><div class="c" style="left:701px;top:533px;width:49px">允许</div><div class="c" style="left:762px;top:533px;width:49px">否</div><div class="c" style="left:823px;top:533px;width:49px">%Sy...</div><div class="c" style="left:885px;top:533px;width:79px">任何</div><div class="c" style="left:976px;top:533px;width:79px">任何</div><div class="c" style="left:1067px;top:533px;width:49px"><span style="letter-spacing:-0.4px">TCP</span></div><div class="c" style="left:1128px;top:533px;width:79px"><span style="letter-spacing:0.2px">23554, 2...</span></div><div class="c" style="left:1219px;top:533px;width:79px">任何</div><div class="c" style="left:1310px;top:533px;width:95px">任何</div><div class="c" style="left:1417px;top:533px;width:47px">任何</div><svg style="left:7px;top:559px" width="18" height="18"><use href="#i-ok"/></svg><div class="c" style="left:28px;top:559px;width:281px">“播放到设备”流式处理服务器<span style="letter-spacing:0.3px">(RTSP-Streaming-In)</span></div><div class="c" style="left:321px;top:559px;width:200px">“播放到设备”功能</div><div class="c" style="left:533px;top:559px;width:79px">公用</div><div class="c" style="left:624px;top:559px;width:65px">是</div><div class="c" style="left:701px;top:559px;width:49px">允许</div><div class="c" style="left:762px;top:559px;width:49px">否</div><div class="c" style="left:823px;top:559px;width:49px">%Sy...</div><div class="c" style="left:885px;top:559px;width:79px">任何</div><div class="c" style="left:976px;top:559px;width:79px"><span style="letter-spacing:0.3px">PlayTo ...</span></div><div class="c" style="left:1067px;top:559px;width:49px"><span style="letter-spacing:-0.4px">TCP</span></div><div class="c" style="left:1128px;top:559px;width:79px"><span style="letter-spacing:0.2px">23554, 2...</span></div><div class="c" style="left:1219px;top:559px;width:79px">任何</div><div class="c" style="left:1310px;top:559px;width:95px">任何</div><div class="c" style="left:1417px;top:559px;width:47px">任何</div><div class="c" style="left:28px;top:585px;width:281px"><span style="letter-spacing:0.6px">AllJoyn</span> 路由器<span style="letter-spacing:-0.1px">(UDP-In)</span></div><div class="c" style="left:321px;top:585px;width:200px"><span style="letter-spacing:0.6px">AllJoyn</span> 路由器</div><div class="c" style="left:533px;top:585px;width:79px">域<span style="letter-spacing:-0.1px">,</span> 专用</div><div class="c" style="left:624px;top:585px;width:65px">否</div><div class="c" style="left:701px;top:585px;width:49px">允许</div><div class="c" style="left:762px;top:585px;width:49px">否</div><div class="c" style="left:823px;top:585px;width:49px">%Sy...</div><div class="c" style="left:885px;top:585px;width:79px">任何</div><div class="c" style="left:976px;top:585px;width:79px">任何</div><div class="c" style="left:1067px;top:585px;width:49px"><span style="letter-spacing:-0.4px">UDP</span></div><div class="c" style="left:1128px;top:585px;width:79px">任何</div><div class="c" style="left:1219px;top:585px;width:79px">任何</div><div class="c" style="left:1310px;top:585px;width:95px">任何</div><div class="c" style="left:1417px;top:585px;width:47px">任何</div><div class="c" style="left:28px;top:612px;width:281px"><span style="letter-spacing:0.6px">AllJoyn</span> 路由器<span style="letter-spacing:-0.1px">(TCP-In)</span></div><div class="c" style="left:321px;top:612px;width:200px"><span style="letter-spacing:0.6px">AllJoyn</span> 路由器</div><div class="c" style="left:533px;top:612px;width:79px">域<span style="letter-spacing:-0.1px">,</span> 专用</div><div class="c" style="left:624px;top:612px;width:65px">否</div><div class="c" style="left:701px;top:612px;width:49px">允许</div><div class="c" style="left:762px;top:612px;width:49px">否</div><div class="c" style="left:823px;top:612px;width:49px">%Sy...</div><div class="c" style="left:885px;top:612px;width:79px">任何</div><div class="c" style="left:976px;top:612px;width:79px">任何</div><div class="c" style="left:1067px;top:612px;width:49px"><span style="letter-spacing:-0.4px">TCP</span></div><div class="c" style="left:1128px;top:612px;width:79px"><span style="letter-spacing:0.5px">9955</span></div><div class="c" style="left:1219px;top:612px;width:79px">任何</div><div class="c" style="left:1310px;top:612px;width:95px">任何</div><div class="c" style="left:1417px;top:612px;width:47px">任何</div><div class="c" style="left:28px;top:638px;width:281px">传递优化<span style="letter-spacing:-0.1px">(TCP-In)</span></div><div class="c" style="left:321px;top:638px;width:200px">传递优化</div><div class="c" style="left:533px;top:638px;width:79px">所有</div><div class="c" style="left:624px;top:638px;width:65px">否</div><div class="c" style="left:701px;top:638px;width:49px">允许</div><div class="c" style="left:762px;top:638px;width:49px">否</div><div class="c" style="left:823px;top:638px;width:49px">%Sy...</div><div class="c" style="left:885px;top:638px;width:79px">任何</div><div class="c" style="left:976px;top:638px;width:79px">任何</div><div class="c" style="left:1067px;top:638px;width:49px"><span style="letter-spacing:-0.4px">TCP</span></div><div class="c" style="left:1128px;top:638px;width:79px"><span style="letter-spacing:0.5px">7680</span></div><div class="c" style="left:1219px;top:638px;width:79px">任何</div><div class="c" style="left:1310px;top:638px;width:95px">任何</div><div class="c" style="left:1417px;top:638px;width:47px">任何</div><div class="c" style="left:28px;top:664px;width:281px">传递优化<span style="letter-spacing:-0.1px">(UDP-In)</span></div><div class="c" style="left:321px;top:664px;width:200px">传递优化</div><div class="c" style="left:533px;top:664px;width:79px">所有</div><div class="c" style="left:624px;top:664px;width:65px">否</div><div class="c" style="left:701px;top:664px;width:49px">允许</div><div class="c" style="left:762px;top:664px;width:49px">否</div><div class="c" style="left:823px;top:664px;width:49px">%Sy...</div><div class="c" style="left:885px;top:664px;width:79px">任何</div><div class="c" style="left:976px;top:664px;width:79px">任何</div><div class="c" style="left:1067px;top:664px;width:49px"><span style="letter-spacing:-0.4px">UDP</span></div><div class="c" style="left:1128px;top:664px;width:79px"><span style="letter-spacing:0.5px">7680</span></div><div class="c" style="left:1219px;top:664px;width:79px">任何</div><div class="c" style="left:1310px;top:664px;width:95px">任何</div><div class="c" style="left:1417px;top:664px;width:47px">任何</div><div class="c" style="left:28px;top:690px;width:281px"><span style="letter-spacing:-0.4px">DIAL</span> 协议服务器<span style="letter-spacing:-0.2px">(HTTP-In)</span></div><div class="c" style="left:321px;top:690px;width:200px"><span style="letter-spacing:-0.4px">DIAL</span> 协议服务器</div><div class="c" style="left:533px;top:690px;width:79px">专用</div><div class="c" style="left:624px;top:690px;width:65px">否</div><div class="c" style="left:701px;top:690px;width:49px">允许</div><div class="c" style="left:762px;top:690px;width:49px">否</div><div class="c" style="left:823px;top:690px;width:49px"><span style="letter-spacing:0.3px">Syst...</span></div><div class="c" style="left:885px;top:690px;width:79px">任何</div><div class="c" style="left:976px;top:690px;width:79px">本地子网</div><div class="c" style="left:1067px;top:690px;width:49px"><span style="letter-spacing:-0.4px">TCP</span></div><div class="c" style="left:1128px;top:690px;width:79px"><span style="letter-spacing:0.5px">10247</span></div><div class="c" style="left:1219px;top:690px;width:79px">任何</div><div class="c" style="left:1310px;top:690px;width:95px">任何</div><div class="c" style="left:1417px;top:690px;width:47px">任何</div><div class="c" style="left:28px;top:716px;width:281px"><span style="letter-spacing:-0.4px">DIAL</span> 协议服务器<span style="letter-spacing:-0.2px">(HTTP-In)</span></div><div class="c" style="left:321px;top:716px;width:200px"><span style="letter-spacing:-0.4px">DIAL</span> 协议服务器</div><div class="c" style="left:533px;top:716px;width:79px">域</div><div class="c" style="left:624px;top:716px;width:65px">否</div><div class="c" style="left:701px;top:716px;width:49px">允许</div><div class="c" style="left:762px;top:716px;width:49px">否</div><div class="c" style="left:823px;top:716px;width:49px"><span style="letter-spacing:0.3px">Syst...</span></div><div class="c" style="left:885px;top:716px;width:79px">任何</div><div class="c" style="left:976px;top:716px;width:79px">任何</div><div class="c" style="left:1067px;top:716px;width:49px"><span style="letter-spacing:-0.4px">TCP</span></div><div class="c" style="left:1128px;top:716px;width:79px"><span style="letter-spacing:0.5px">10247</span></div><div class="c" style="left:1219px;top:716px;width:79px">任何</div><div class="c" style="left:1310px;top:716px;width:95px">任何</div><div class="c" style="left:1417px;top:716px;width:47px">任何</div><div class="c" style="left:28px;top:743px;width:281px"><span style="letter-spacing:-0.4px">FTP</span> 服务器<span style="letter-spacing:-0.4px">(FTP</span> 流入量<span style="letter-spacing:-0.1px">)</span></div><div class="c" style="left:321px;top:743px;width:200px"><span style="letter-spacing:-0.4px">FTP</span> 服务器</div><div class="c" style="left:533px;top:743px;width:79px">所有</div><div class="c" style="left:624px;top:743px;width:65px">否</div><div class="c" style="left:701px;top:743px;width:49px">允许</div><div class="c" style="left:762px;top:743px;width:49px">否</div><div class="c" style="left:823px;top:743px;width:49px"><span style="letter-spacing:0.3px">%wi...</span></div><div class="c" style="left:885px;top:743px;width:79px">任何</div><div class="c" style="left:976px;top:743px;width:79px">任何</div><div class="c" style="left:1067px;top:743px;width:49px"><span style="letter-spacing:-0.4px">TCP</span></div><div class="c" style="left:1128px;top:743px;width:79px"><span style="letter-spacing:0.5px">21</span></div><div class="c" style="left:1219px;top:743px;width:79px">任何</div><div class="c" style="left:1310px;top:743px;width:95px">任何</div><div class="c" style="left:1417px;top:743px;width:47px">任何</div><div class="c" style="left:28px;top:769px;width:281px"><span style="letter-spacing:-0.4px">FTP</span> 服务器安全<span style="letter-spacing:-0.4px">(FTP SSL</span> 流入量<span style="letter-spacing:-0.1px">)</span></div><div class="c" style="left:321px;top:769px;width:200px"><span style="letter-spacing:-0.4px">FTP</span> 服务器</div><div class="c" style="left:533px;top:769px;width:79px">所有</div><div class="c" style="left:624px;top:769px;width:65px">否</div><div class="c" style="left:701px;top:769px;width:49px">允许</div><div class="c" style="left:762px;top:769px;width:49px">否</div><div class="c" style="left:823px;top:769px;width:49px"><span style="letter-spacing:0.3px">%wi...</span></div><div class="c" style="left:885px;top:769px;width:79px">任何</div><div class="c" style="left:976px;top:769px;width:79px">任何</div><div class="c" style="left:1067px;top:769px;width:49px"><span style="letter-spacing:-0.4px">TCP</span></div><div class="c" style="left:1128px;top:769px;width:79px"><span style="letter-spacing:0.5px">990</span></div><div class="c" style="left:1219px;top:769px;width:79px">任何</div><div class="c" style="left:1310px;top:769px;width:95px">任何</div><div class="c" style="left:1417px;top:769px;width:47px">任何</div><div class="c" style="left:28px;top:795px;width:281px"><span style="letter-spacing:-0.4px">FTP</span> 服务器被动<span style="letter-spacing:-0.4px">(FTP</span> 被动流入量<span style="letter-spacing:-0.1px">)</span></div><div class="c" style="left:321px;top:795px;width:200px"><span style="letter-spacing:-0.4px">FTP</span> 服务器</div><div class="c" style="left:533px;top:795px;width:79px">所有</div><div class="c" style="left:624px;top:795px;width:65px">否</div><div class="c" style="left:701px;top:795px;width:49px">允许</div><div class="c" style="left:762px;top:795px;width:49px">否</div><div class="c" style="left:823px;top:795px;width:49px"><span style="letter-spacing:-0.2px">C:\W...</span></div><div class="c" style="left:885px;top:795px;width:79px">任何</div><div class="c" style="left:976px;top:795px;width:79px">任何</div><div class="c" style="left:1067px;top:795px;width:49px"><span style="letter-spacing:-0.4px">TCP</span></div><div class="c" style="left:1128px;top:795px;width:79px"><span style="letter-spacing:0.3px">1024-65...</span></div><div class="c" style="left:1219px;top:795px;width:79px">任何</div><div class="c" style="left:1310px;top:795px;width:95px">任何</div><div class="c" style="left:1417px;top:795px;width:47px">任何</div><svg style="left:7px;top:822px" width="18" height="18"><use href="#i-ok"/></svg><div class="c" style="left:28px;top:822px;width:281px"><span style="letter-spacing:0.4px">Google Chrome (mDNS-In)</span></div><div class="c" style="left:321px;top:822px;width:200px"><span style="letter-spacing:0.7px">Google Chrome</span></div><div class="c" style="left:533px;top:822px;width:79px">所有</div><div class="c" style="left:624px;top:822px;width:65px">是</div><div class="c" style="left:701px;top:822px;width:49px">允许</div><div class="c" style="left:762px;top:822px;width:49px">否</div><div class="c" style="left:823px;top:822px;width:49px">C:\Pr...</div><div class="c" style="left:885px;top:822px;width:79px">任何</div><div class="c" style="left:976px;top:822px;width:79px">任何</div><div class="c" style="left:1067px;top:822px;width:49px"><span style="letter-spacing:-0.4px">UDP</span></div><div class="c" style="left:1128px;top:822px;width:79px"><span style="letter-spacing:0.5px">5353</span></div><div class="c" style="left:1219px;top:822px;width:79px">任何</div><div class="c" style="left:1310px;top:822px;width:95px">任何</div><div class="c" style="left:1417px;top:822px;width:47px">任何</div><svg style="left:7px;top:848px" width="18" height="18"><use href="#i-ok"/></svg><div class="c" style="left:28px;top:848px;width:281px"><span style="letter-spacing:0.8px">Microsoft</span> 家庭安全</div><div class="c" style="left:321px;top:848px;width:200px"><span style="letter-spacing:0.8px">Microsoft</span> 家庭安全</div><div class="c" style="left:533px;top:848px;width:79px">域<span style="letter-spacing:-0.1px">,</span> 专用</div><div class="c" style="left:624px;top:848px;width:65px">是</div><div class="c" style="left:701px;top:848px;width:49px">允许</div><div class="c" style="left:762px;top:848px;width:49px">否</div><div class="c" style="left:823px;top:848px;width:49px">任何</div><div class="c" style="left:885px;top:848px;width:79px">任何</div><div class="c" style="left:976px;top:848px;width:79px">任何</div><div class="c" style="left:1067px;top:848px;width:49px">任何</div><div class="c" style="left:1128px;top:848px;width:79px">任何</div><div class="c" style="left:1219px;top:848px;width:79px">任何</div><div class="c" style="left:1310px;top:848px;width:95px">任何</div><div class="c" style="left:1417px;top:848px;width:47px">任何</div></div><div class="a" id="vsb"></div><div class="a" id="vth"></div><svg style="left:1897px;top:127px" width="21" height="853"><path d="M5.500 15.500l4.500-4.500l4.500 4.500M5.500 837.500l4.500 4.500l4.500-4.500" fill="none" stroke="#5a5a5a" stroke-width="2.200"/></svg><div class="a" id="hsb"></div><div class="a" id="hth"></div><svg style="left:429px;top:980px" width="1489" height="21"><path d="M14 5l-4.500 4.500l4.500 4.500M1454 5l4.500 4.500l-4.500 4.500" fill="none" stroke="#5a5a5a" stroke-width="2.200"/></svg><div class="a" id="status"></div><div class="a ssep" style="left:1644px"></div><div class="a ssep" style="left:1810px"></div><div class="a ssep" style="left:1917px"></div><div class="a" id="dshadow"></div><div class="a" id="dlg"><svg style="left:10px;top:7px" width="20" height="20"><use href="#i-fwglobe"/></svg><div class="t" id="dtitle">新建入站规则向导</div><svg style="left:864px;top:12px" width="14" height="14"><path d="M.5 .5l12 12M12.500 .5l-12 12" stroke="#000" stroke-width="1.100" fill="none"/></svg><div class="t" id="h1">规则类型</div><div class="t w" id="h2">选择要创建的防火墙规则类型</div><div class="a" id="dline"></div><div class="a" id="steps"></div><div class="a" id="stepsr"></div><div class="a" id="stephd"></div><div class="a" id="stepsel"></div><div class="t wb" style="left:7px;top:114px">步骤<span class="m mb" style="width:8.5px;padding-left:1.75px;letter-spacing:3.50px">:</span></div><svg style="left:5px;top:151.0px" width="11" height="11"><ellipse cx="5.500" cy="5.500" rx="5.100" ry="4.500" fill="url(#gdotg)"/></svg><div class="t" style="left:26px;top:147.0px;color:#000">规则类型</div><svg style="left:5px;top:182.2px" width="11" height="11"><ellipse cx="5.500" cy="5.500" rx="5.100" ry="4.500" fill="url(#gdotg)"/></svg><div class="t" style="left:26px;top:178.2px;color:#0066cc">协议和端口</div><svg style="left:5px;top:213.5px" width="11" height="11"><ellipse cx="5.500" cy="5.500" rx="5.100" ry="4.500" fill="url(#gdotb)"/></svg><div class="t" style="left:26px;top:209.5px;color:#000">操作</div><svg style="left:5px;top:244.8px" width="11" height="11"><ellipse cx="5.500" cy="5.500" rx="5.100" ry="4.500" fill="url(#gdotb)"/></svg><div class="t" style="left:26px;top:240.8px;color:#000">配置文件</div><svg style="left:5px;top:276.0px" width="11" height="11"><ellipse cx="5.500" cy="5.500" rx="5.100" ry="4.500" fill="url(#gdotb)"/></svg><div class="t" style="left:26px;top:272.0px;color:#000">名称</div><div class="a" id="main"></div><div class="t w" style="left:253px;top:138px">要创建的规则类型</div><div class="a radio" style="left:251px;top:198px"></div><div class="t wb" style="left:273px;top:196px">程序<span class="m mb" style="width:25.5px;padding-left:1.06px;letter-spacing:2.11px">(<span class="u">P</span>)</span></div><div class="a radio on" style="left:251px;top:252px"></div><div class="t wb" style="left:273px;top:250px">端口<span class="m mb" style="width:25.5px;padding-left:0.64px;letter-spacing:1.28px">(<span class="u">O</span>)</span></div><div class="a radio" style="left:251px;top:305px"></div><div class="t wb" style="left:273px;top:303px">预定义<span class="m mb" style="width:25.5px;padding-left:0.92px;letter-spacing:1.83px">(<span class="u">E</span>)</span><span class="m mb" style="width:8.5px;padding-left:1.75px;letter-spacing:3.50px">:</span></div><div class="a radio" style="left:251px;top:386px"></div><div class="t wb" style="left:273px;top:384px">自定义<span class="m mb" style="width:25.5px;padding-left:0.78px;letter-spacing:1.56px">(<span class="u">C</span>)</span></div><div class="t w" style="left:273px;top:216px">控制程序连接的规则。</div><div class="t w" style="left:273px;top:270px">控制<span class="m" style="width:37.5px;padding-left:7.75px"><span style="transform:scaleX(0.800)">TCP</span></span>或<span class="m" style="width:37.5px;padding-left:7.75px"><span style="transform:scaleX(0.733)">UDP</span></span>端口连接的规则。</div><div class="a" id="combo"><div class="t w" style="left:2px;top:1px"><span class="q">“</span>播放到设备<span class="q">”</span>功能</div><svg style="left:525px;top:8.500px" width="14" height="9"><path d="M1.500 1.500l5 5l5-5" fill="none" stroke="#acacac" stroke-width="1.200"/></svg></div><div class="t w" style="left:273px;top:352px">控制<span class="m" style="width:67.5px;padding-left:7.75px"><span style="transform:scaleX(0.914)">Windows</span></span>体验功能连接的规则。</div><div class="t w" style="left:273px;top:404px">自定义规则。</div><div class="a btn w" style="left:530px;width:104px;background:#cccccc;border-color:#bfbfbf;color:#838383"><span class="m" style="width:15.0px;padding-left:0.25px"><span style="transform:scaleX(0.827)">&lt;</span></span>上一步<span class="m" style="width:22.5px;padding-left:0.42px;letter-spacing:0.83px">(<span class="u">B</span>)</span></div><div class="a btn w" style="left:640px;width:110px;border:2px solid #0078d7;line-height:21px">下一步<span class="m" style="width:22.5px;padding-left:0.28px;letter-spacing:0.56px">(<span class="u">N</span>)</span><span class="m" style="width:15.0px;padding-left:7.75px"><span style="transform:scaleX(0.827)">&gt;</span></span></div><div class="a btn w" style="left:760px;width:104px">取消</div></div></body></html>
